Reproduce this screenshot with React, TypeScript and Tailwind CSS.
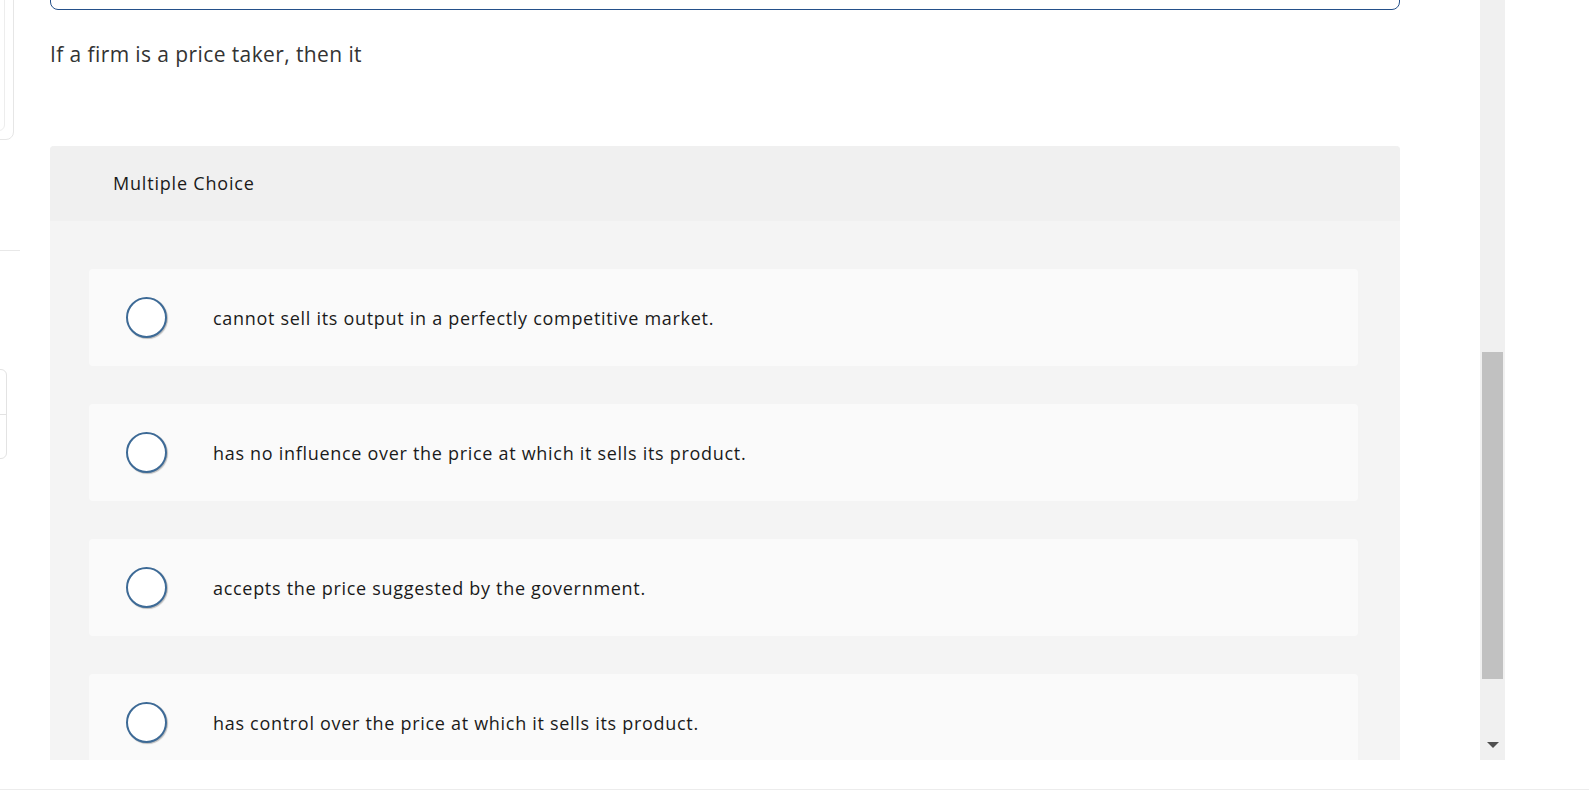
const options = [
  'cannot sell its output in a perfectly competitive market.',
  'has no influence over the price at which it sells its product.',
  'accepts the price suggested by the government.',
  'has control over the price at which it sells its product.',
];

function Radio() {
  return (
    <span className="block w-[41px] h-[41px] shrink-0 rounded-full border-2 border-[#3d6a96] bg-white shadow-[1px_1px_1px_rgba(0,0,0,0.25)]" />
  );
}

function SidebarEdge() {
  return (
    <div className="w-[50px] shrink-0 flex flex-col">
      <div className="-ml-[60px] w-[74px] h-[160px] mt-[-20px] shrink-0 rounded-lg border border-[#e6e6e6] p-[8px]">
        <div className="h-full rounded-md border border-[#ededed]" />
      </div>
      <div className="mt-[110px] w-[20px] border-t border-[#e8e8e8]" />
      <div className="mt-[118px] -ml-[40px] w-[47px] h-[90px] shrink-0 rounded-md border border-[#e3e3e3] flex flex-col">
        <div className="h-[45px] border-b border-[#e3e3e3]" />
      </div>
    </div>
  );
}

export default function App() {
  return (
    <div className="w-full h-[793px] bg-white overflow-hidden flex flex-col" style={{ fontFamily: '"Open Sans", Lato, sans-serif' }}>
      <div className="h-[760px] flex shrink-0">
        <div className="w-[1480px] shrink-0 overflow-hidden flex">
          <SidebarEdge />
          <div className="w-[1350px] shrink-0 flex flex-col min-h-0">
            <div className="mt-[-40px] h-[50px] shrink-0 rounded-lg border border-[#24508a]" />
            <p className="mt-[30px] text-[21px] leading-[28px] text-[#333333] tracking-[0.4px]">
              If a firm is a price taker, then it
            </p>
            <div className="mt-[78px] flex-1 min-h-0 rounded-t-[4px] overflow-hidden bg-[#f4f4f4] flex flex-col">
              <div className="h-[75px] shrink-0 bg-[#f0f0f0] pl-[63px] flex items-center">
                <span className="text-[18px] text-[#1a1a1a] tracking-[0.8px]">Multiple Choice</span>
              </div>
              <div className="pt-[48px] pl-[39px] pr-[42px] flex flex-col gap-[38px]">
                {options.map((o) => (
                  <div key={o} className="h-[97px] shrink-0 rounded-[4px] bg-[#fafafa] pl-[37px] flex items-center gap-[46px]">
                    <Radio />
                    <span className="text-[18px] text-[#1a1a1a] tracking-[0.7px] pt-[2px]">{o}</span>
                  </div>
                ))}
              </div>
            </div>
          </div>
        </div>
        <div className="w-[25px] shrink-0 bg-[#f0f0f0] flex flex-col items-center">
          <div className="mt-[352px] w-[21px] h-[327px] bg-[#c1c1c1]" />
          <div className="mt-[63px] w-0 h-0 border-l-[6px] border-r-[6px] border-t-[6px] border-l-transparent border-r-transparent border-t-[#505050]" />
        </div>
      </div>
      <div className="h-[30px] shrink-0 border-b border-[#ececec]" />
    </div>
  );
}
